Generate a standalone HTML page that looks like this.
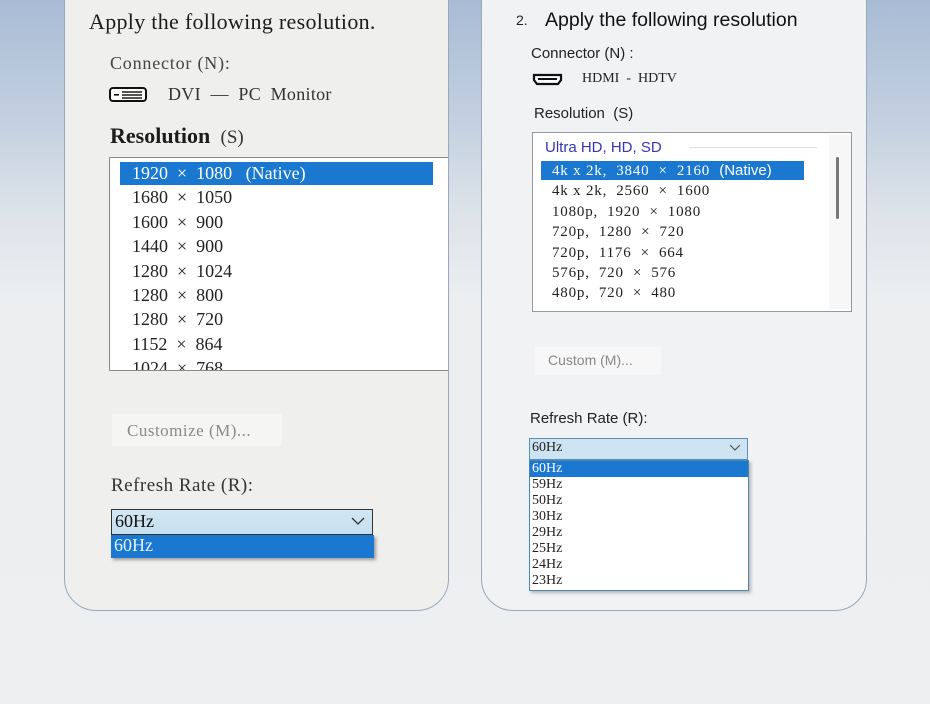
<!DOCTYPE html>
<html><head><meta charset="utf-8"><style>
*{margin:0;padding:0;box-sizing:border-box}
body{width:930px;height:704px;overflow:hidden;position:relative;background:linear-gradient(180deg,#a8bcd5 0px,#c3d0e0 120px,#dfe4ea 220px,#eceef0 300px,#eeeff1 704px);font-family:"Liberation Serif",serif}
.card{position:absolute;top:-30px;height:641px;background:#f1f1f0;border:1px solid #9aa8bc;border-radius:32px;overflow:hidden}
#L{left:64px;width:385px;background:#efefed}
#R{left:481px;width:386px;background:#f1f2f3}
.a{position:absolute;white-space:nowrap;color:#222}
.box{position:absolute;background:#fff;border:1px solid #8a8a8a}
.hl{position:absolute;background:#1b78d0}
.sans{font-family:"Liberation Sans",sans-serif}
</style></head><body>
<div class="card" id="L"></div>
<div class="card" id="R"></div>

<!-- left -->
<div class="a" style="left:89px;top:9px;font-size:22px;color:#1c1c1c;letter-spacing:.3px">Apply the following resolution.</div>
<div class="a" style="left:110px;top:53px;font-size:18px;color:#444;letter-spacing:.8px">Connector (N):</div>
<svg class="a" style="left:109px;top:87px" width="40" height="16"><rect x="1" y="1" width="36" height="13" rx="3" fill="#fff" stroke="#111" stroke-width="2"/><rect x="5" y="7" width="5" height="1.6" fill="#111"/><g fill="#555"><rect x="13" y="4" width="20" height="2"/><rect x="13" y="7" width="20" height="2"/><rect x="13" y="10" width="20" height="2"/></g></svg>
<div class="a" style="left:168px;top:84px;font-size:18px;color:#333;letter-spacing:.3px">DVI &nbsp;— &nbsp;PC &nbsp;Monitor</div>
<div class="a" style="left:110px;top:123px;font-size:22px;font-weight:bold;color:#1c1c1c">Resolution <span style="font-weight:normal;font-size:19px;color:#333">&nbsp;(S)</span></div>
<div class="box" style="left:109px;top:157px;width:339px;height:214px;overflow:hidden;border-right:none">
<div class="hl" style="left:10px;top:4px;width:313px;height:23px"></div>
<div class="a" style="left:22px;top:3px;font-size:18px;line-height:24.4px;color:#222">
<div style="color:#fff">1920 &nbsp;× &nbsp;1080 &nbsp;&nbsp;(Native)</div>
<div>1680 &nbsp;× &nbsp;1050</div><div>1600 &nbsp;× &nbsp;900</div><div>1440 &nbsp;× &nbsp;900</div><div>1280 &nbsp;× &nbsp;1024</div><div>1280 &nbsp;× &nbsp;800</div><div>1280 &nbsp;× &nbsp;720</div><div>1152 &nbsp;× &nbsp;864</div><div>1024 &nbsp;× &nbsp;768</div></div>
</div>
<div class="a" style="left:112px;top:414px;width:170px;height:32px;background:#f5f5f3"></div>
<div class="a" style="left:127px;top:421px;font-size:17px;color:#8a8a8a;letter-spacing:.5px">Customize (M)...</div>
<div class="a" style="left:111px;top:475px;font-size:19px;color:#333;letter-spacing:.5px">Refresh Rate (R):</div>
<div class="a" style="left:111px;top:509px;width:262px;height:26px;background:linear-gradient(#d2e6f3,#c6dfef);border:1px solid #333"></div>
<div class="a" style="left:115px;top:511px;font-size:18px;color:#111">60Hz</div>
<svg class="a" style="left:351px;top:516px" width="14" height="10"><path d="M1 2 L7 8 L13 2" fill="none" stroke="#333" stroke-width="1.3"/></svg>
<div class="a" style="left:111px;top:535px;width:263px;height:23px;background:#1b78d0;box-shadow:2px 2px 3px rgba(0,0,0,.35)"></div>
<div class="a" style="left:114px;top:535px;font-size:18px;color:#e6f3ff">60Hz</div>

<!-- right -->
<div class="a sans" style="left:516px;top:12px;font-size:14px;color:#222">2.</div>
<div class="a sans" style="left:545px;top:9px;font-size:19.5px;color:#111">Apply the following resolution</div>
<div class="a sans" style="left:531px;top:45px;font-size:15px;color:#222">Connector (N) :</div>
<svg class="a" style="left:532px;top:73px" width="32" height="14"><path d="M2 2 H29 V7 L26 11 H5 L2 7 Z" fill="#fff" stroke="#111" stroke-width="2.2"/><rect x="6" y="5" width="19" height="2" fill="#111"/></svg>
<div class="a" style="left:582px;top:71px;font-size:14px;color:#222">HDMI &nbsp;- &nbsp;HDTV</div>
<div class="a sans" style="left:534px;top:105px;font-size:15px;color:#222">Resolution &nbsp;(S)</div>
<div class="box" style="left:532px;top:132px;width:320px;height:180px;border-color:#999">
<div class="a sans" style="left:12px;top:6px;font-size:15px;color:#3535b5">Ultra HD, HD, SD</div>
<div class="a" style="left:156px;top:14px;width:128px;height:1px;background:#ddd"></div>
<div class="a" style="left:296px;top:2px;width:22px;height:174px;background:#f7f7f7"></div>
<div class="a" style="left:303px;top:24px;width:3px;height:62px;background:#777;border-radius:2px"></div>
<div class="hl" style="left:8px;top:28px;width:263px;height:19px"></div>
<div class="a" style="left:19px;top:28px;font-size:15px;line-height:20.4px;color:#222;letter-spacing:.8px">
<div style="color:#fff">4k x 2k, &nbsp;3840 &nbsp;× &nbsp;2160 &nbsp;<span class="sans" style="letter-spacing:0">(Native)</span></div>
<div>4k x 2k, &nbsp;2560 &nbsp;× &nbsp;1600</div><div>1080p, &nbsp;1920 &nbsp;× &nbsp;1080</div><div>720p, &nbsp;1280 &nbsp;× &nbsp;720</div><div>720p, &nbsp;1176 &nbsp;× &nbsp;664</div><div>576p, &nbsp;720 &nbsp;× &nbsp;576</div><div>480p, &nbsp;720 &nbsp;× &nbsp;480</div></div>
</div>
<div class="a" style="left:535px;top:347px;width:126px;height:28px;background:#f7f7f8"></div>
<div class="a sans" style="left:548px;top:352px;font-size:14px;color:#888">Custom (M)...</div>
<div class="a sans" style="left:530px;top:410px;font-size:15px;color:#222">Refresh Rate (R):</div>
<div class="a" style="left:529px;top:438px;width:219px;height:22px;background:#cde3f1;border:1px solid #5a8fb5"></div>
<div class="a" style="left:532px;top:440px;font-size:14px;color:#222">60Hz</div>
<svg class="a" style="left:729px;top:444px" width="12" height="8"><path d="M1 1 L6 6 L11 1" fill="none" stroke="#555" stroke-width="1.2"/></svg>
<div class="a" style="left:529px;top:460px;width:220px;height:131px;background:#fff;border:1px solid #4f86b0;box-shadow:2px 2px 3px rgba(0,0,0,.25)"></div>
<div class="a" style="left:530px;top:461px;width:218px;height:16px;background:#1b78d0"></div>
<div class="a" style="left:532px;top:461px;font-size:14px;line-height:16px;color:#222">
<div style="color:#fff">60Hz</div><div>59Hz</div><div>50Hz</div><div>30Hz</div><div>29Hz</div><div>25Hz</div><div>24Hz</div><div>23Hz</div></div>
</body></html>
